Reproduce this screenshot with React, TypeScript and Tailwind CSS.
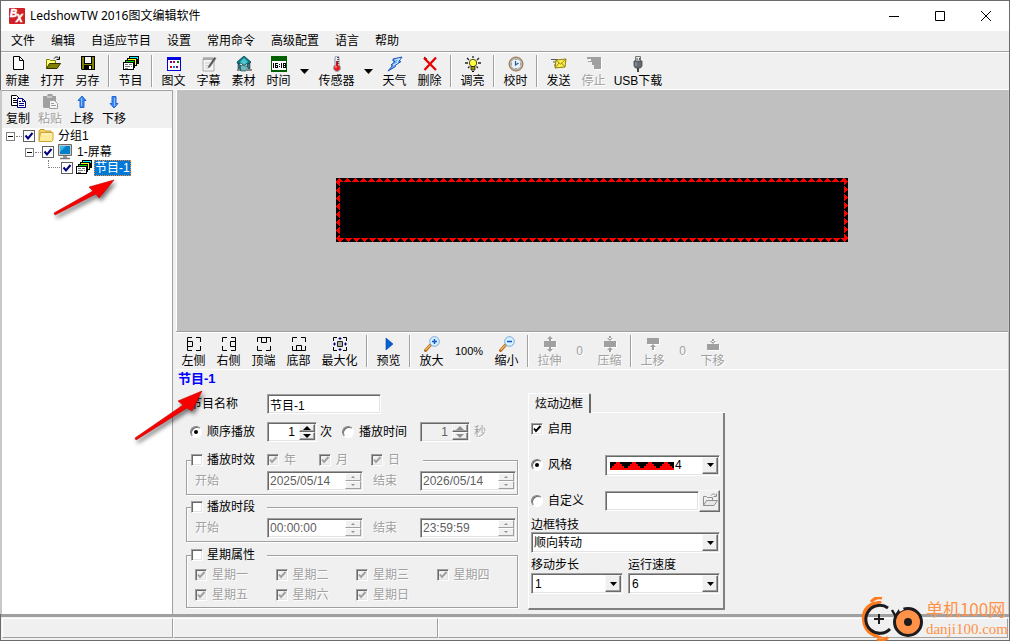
import React, { useId } from "react";

type IconProps = { children: React.ReactNode; size?: string };

function Ico({ children, size = "size-4" }: IconProps) {
  return (
    <svg viewBox="0 0 16 16" className={`${size} shrink-0`} aria-hidden="true">
      {children}
    </svg>
  );
}

/* ---------- icons ---------- */

const NewIcon = () => (
  <Ico>
    <path d="M3.500 .5h6l4 4v9h-10z" fill="#fff" stroke="#000" />
    <path d="M9.500 .5v4h4" fill="none" stroke="#000" />
  </Ico>
);

const OpenIcon = ({ gray = false }: { gray?: boolean }) => (
  <Ico>
    <path d="M1.500 12.500V3.500h3l1 1h5v3" fill={gray ? "#f0f0f0" : "#ffff80"} stroke={gray ? "#909090" : "#808000"} />
    <path d="M1.500 12.500l3-5h11l-3.500 5z" fill={gray ? "#e8e8e8" : "#808000"} stroke={gray ? "#909090" : "#303000"} />
    <path d="M9 2.500c1.500-2 3.500-2 5 0M14.500 .5v3h-3" fill="none" stroke={gray ? "#909090" : "#000"} />
  </Ico>
);

const SaveIcon = () => (
  <Ico>
    <path d="M1 0h14v14H2l-1-1z" fill="#000" />
    <path d="M2 1h2v7h8V1h2v12h-2V9H4v4H2z" fill="#808000" />
    <path d="M5 1h6v6H5z" fill="#f4f4f4" />
    <path d="M9 10h2v3H9z" fill="#fff" />
  </Ico>
);

const ProgramIcon = () => (
  <Ico>
    <g shapeRendering="crispEdges">
      <path d="M6 0h10v8h-3V3H6z" fill="#000" />
      <path d="M7 1h8v2H7z" fill="#00ffff" />
      <path d="M4 2h10v8H4z" fill="#000" />
      <path d="M5 3h8v2H5zM11 5h2v4h-2z" fill="#ffff00" />
      <path d="M2 4h10v8H2z" fill="#000" />
      <path d="M3 5h8v2H3zM9 7h2v4H9z" fill="#00e000" />
      <path d="M0 6h11v8H0z" fill="#000" />
      <path d="M1 7h9v6H1z" fill="#fff" />
      <path d="M2 8h3v1H2zM6 8h3v1H6zM2 10h5v1H2zM8 10h1v1H8zM2 12h3v1H2z" fill="#777" />
    </g>
  </Ico>
);

const GridIcon = () => (
  <Ico>
    <g shapeRendering="crispEdges">
      <path d="M1 1h14v14H1z" fill="#0000e0" />
      <path d="M2 4h12v10H2z" fill="#fff" />
      <path d="M4 5h2v2H4zM10 10h2v2h-2z" fill="#800080" />
      <path d="M7 5h2v2H7z" fill="#c00060" />
      <path d="M11 5h2v2h-2z" fill="#008000" />
      <path d="M4 10h2v2H4z" fill="#e00000" />
      <path d="M7 10h2v2H7z" fill="#0080ff" />
    </g>
  </Ico>
);

const SubtitleIcon = () => (
  <Ico>
    <path d="M2 3h11v12H2z" fill="#f4f4f4" stroke="#aaa" />
    <path d="M3 1v3M5 1v3M7 1v3M9 1v3M11 1v3" stroke="#888" strokeWidth="1" />
    <path d="M13.500 1L15 2.500 9 11l-2 1 .5-2z" fill="#555" stroke="#777" strokeWidth=".5" />
    <path d="M4 7h5M4 9.500h3M4 12h3" stroke="#ccc" />
  </Ico>
);

const MaterialIcon = () => (
  <Ico>
    <path d="M8 0l7 6-2 2-2-1-3 3-3-3-3 1-1-2z" fill="#0b7b86" stroke="#064750" strokeWidth=".8" />
    <path d="M8 2l4 4-4 3-4-3z" fill="#4cc6cc" />
    <path d="M2 7.500l3 2v5H2zM11 8l3-1v6l-3 1z" fill="#32777e" stroke="#123" strokeWidth=".5" />
    <path d="M4 10l4-1 5 3-3 3H5z" fill="#6fb7b8" stroke="#0b444b" strokeWidth=".6" />
    <path d="M10 13h6v2h-6zM1 13h3v2H1z" fill="#888" />
  </Ico>
);

const TimeIcon = () => (
  <Ico>
    <g shapeRendering="crispEdges">
      <path d="M0 0h16v16H0z" fill="#006000" />
      <path d="M1 5h14v9H1z" fill="#fff" />
      <path d="M2 7h1v5H2zM4 7h1v5H4zM5 7h2v1H5zM5 9h2v1H5zM6 10h1v2H6zM5 11h1v1H5zM8 8h1v1H8zM8 10h1v1H8zM10 7h1v5h-1zM12 7h1v5h-1zM14 7h1v5h-1zM13 7h1v1h-1zM13 9h1v1h-1zM13 11h1v1h-1z" fill="#000" />
    </g>
  </Ico>
);

const ThermometerIcon = () => (
  <Ico>
    <path d="M6 2a2 2 0 014 0v7a3.500 3.500 0 11-4 0z" fill="#eef3fa" stroke="#8793a8" />
    <circle cx="8" cy="12" r="3" fill="#e02020" />
    <path d="M8 5v6" stroke="#d01818" strokeWidth="2" />
    <path d="M8 1.500h2M8 3.500h2M8 5.500h2M8 7.500h2" stroke="#333" strokeWidth=".8" />
    <circle cx="7" cy="11" r=".9" fill="#ff9b9b" />
  </Ico>
);

const WeatherIcon = () => (
  <Ico>
    <path d="M6 3l9-2-3 4 2 .5-6 4 .5 1L1 15l4.500-5.500L4 9l4-3.500L6 5z" fill="#6db5f5" stroke="#1c4fb5" />
    <path d="M8 4l5-1.500-3 3.500 1 .5-5 3" fill="none" stroke="#d5efff" />
  </Ico>
);

const DeleteIcon = () => (
  <Ico>
    <path d="M2 2l12 12M14 1.500L2.500 14" stroke="#e80000" strokeWidth="2.300" />
    <path d="M2 1l3 2" stroke="#900000" />
  </Ico>
);

const BulbIcon = () => (
  <Ico>
    <path d="M8 0v2M2 2l2 2M14 2l-2 2M0 7h3M13 7h3M3 12l1.500-1.500M13 12l-1.500-1.500" stroke="#222" strokeWidth="1.300" />
    <circle cx="8" cy="7" r="3.700" fill="#ffff38" stroke="#504c00" />
    <path d="M6 6a2 2 0 012-1.500" fill="none" stroke="#fff" />
    <path d="M6 10.500h4V14H6z" fill="#9a9100" stroke="#222" strokeWidth=".8" />
    <path d="M7 15.500h2" stroke="#000" />
  </Ico>
);

const ClockIcon = () => (
  <Ico>
    <circle cx="8" cy="8" r="7" fill="#c9a77a" stroke="#90765a" />
    <circle cx="8" cy="8" r="5.200" fill="#e6f3fc" stroke="#a9bac9" />
    <path d="M7.500 5v4l3-2" fill="none" stroke="#31577c" strokeWidth="1.200" />
    <path d="M8 3v1M8 12v1M3 8h1M12 8h1" stroke="#668" />
  </Ico>
);

const SendIcon = () => (
  <Ico>
    <path d="M0 3.500h7M2 6h4M3 9h3" stroke="#555" />
    <path d="M5 4l10-1-1 8-10 1z" fill="#ffed50" stroke="#8b8110" />
    <path d="M5 4l4.500 4L15 3M4 12l4-5M14 11l-3.500-4" fill="none" stroke="#8b8110" strokeWidth=".9" />
  </Ico>
);

const StopIcon = () => (
  <Ico>
    <path d="M2 2h14v12H9V9H6V6H2z" fill="#fff" />
    <path d="M1 1h14v12H8V9H6V6H2V5h3V4H1z" fill="#a0a0a0" />
    <path d="M1 3.500h4" stroke="#f0f0f0" />
  </Ico>
);

const UsbIcon = () => (
  <Ico>
    <path d="M5.500 .5h5V6h-5z" fill="#e9e9e9" stroke="#777" />
    <path d="M6.500 2h1v2h-1zM9 2h1v2H9z" fill="#555" />
    <path d="M4 5h8v5l-1.500 2h-5L4 10z" fill="#666b72" stroke="#41454b" strokeWidth=".8" />
    <path d="M6 6v4" stroke="#a3a7ac" />
    <path d="M8 12v4" stroke="#444" strokeWidth="2" />
  </Ico>
);

const CopyIcon = () => (
  <Ico>
    <path d="M1.500 1.500h5l3 3v7h-8z" fill="#fff" stroke="#000" />
    <path d="M3 4.500h3M3 6.500h4M3 8.500h4" stroke="#000" />
    <path d="M7.500 4.500h5l3 3v6h-8z" fill="#fff" stroke="#000080" />
    <path d="M12.500 4.500v3h3M9 7.500h2M9 9.500h5M9 11.500h5" fill="none" stroke="#000080" />
  </Ico>
);

const PasteIcon = () => (
  <Ico>
    <path d="M1 2h4l1-2h4l1 2h3v12H2l-1-1z" fill="#a0a0a0" />
    <path d="M5 3h5" stroke="#eee" />
    <path d="M7.500 6.500h5l3 3v5h-8z" fill="#f4f4f4" stroke="#a0a0a0" />
    <path d="M9 9.500h3M9 11.500h5" stroke="#a0a0a0" />
  </Ico>
);

const BlueArrow = ({ down = false }: { down?: boolean }) => (
  <Ico>
    <g transform={down ? "rotate(180 8 8)" : undefined}>
      <path d="M8 2l4 4.500H10v7H6v-7H4z" fill="#3a86f0" stroke="#2468d8" />
      <path d="M7.500 4v8" stroke="#8fc2ff" />
    </g>
  </Ico>
);

const FolderIcon = () => (
  <Ico>
    <path d="M1 13V3l1-1.500h4L7.500 3H13v2" fill="#f5d066" stroke="#c69a26" />
    <path d="M1 13.500l1.500-9h12.500V12l-1.500 1.500z" fill="#ffeb9c" stroke="#cfa433" />
    <path d="M4 6h9" stroke="#fff7cf" />
  </Ico>
);

const MonitorIcon = () => (
  <Ico>
    <path d="M1.500 .5h13v11h-13z" fill="#c8c8c8" stroke="#6b6b6b" />
    <path d="M3 2h10v8H3z" fill="#0080c8" />
    <path d="M3 2h6L3 8z" fill="#37b5e6" />
    <path d="M6 12h4v2H6z" fill="#999" />
    <path d="M3 14.500h10" stroke="#777" strokeWidth="1.500" />
  </Ico>
);

type Side = "left" | "right" | "top" | "bottom" | "max";
const inner: Record<Side, string> = {
  left: "M1.500 5.500h5v5h-5",
  right: "M14.500 5.500h-5v5h5",
  top: "M5.500 1.500v5h5v-5",
  bottom: "M5.500 14.500v-5h5v5",
  max: "",
};
const outer: Record<Side, string> = {
  left: "M6 1.500H1.500v13H6M10 1.500h4.500V6M14.500 10v4.500H10",
  right: "M10 1.500h4.500v13H10M6 1.500H1.500V6M1.500 10v4.500H6",
  top: "M1.500 6V1.500h13V6M1.500 10v4.500H6M10 14.500h4.500V10",
  bottom: "M1.500 10v4.500h13V10M1.500 6V1.500H6M10 1.500h4.500V6",
  max: "M1.500 5V1.500H5M11 1.500h3.500V5M14.500 11v3.500H11M5 14.500H1.500V11",
};

const AlignIcon = ({ side }: { side: Side }) => (
  <Ico>
    <path d={outer[side]} fill="none" stroke="#000" />
    <path d={inner[side]} fill="none" stroke="#000" />
    {side === "max" && (
      <>
        <path d="M5.500 5.500h5v5h-5z" fill="#b0b0b0" stroke="#222" />
        <path d="M8 1v3M6.500 2.500h3M8 12v3M6.500 13.500h3M1 8h3M2.500 6.500v3M12 8h3M13.500 6.500v3" stroke="#000080" />
      </>
    )}
  </Ico>
);

const PlayIcon = () => (
  <Ico>
    <path d="M5 2l7 6-7 6z" fill="#0060d0" stroke="#0048a8" strokeWidth=".6" />
  </Ico>
);

const ZoomIcon = ({ plus = false }: { plus?: boolean }) => (
  <Ico>
    <path d="M6.500 9L1.500 14.500" stroke="#b06a20" strokeWidth="3" strokeLinecap="round" />
    <path d="M6.500 9L1.500 14" stroke="#f5b75c" strokeWidth="1.300" />
    <circle cx="10.500" cy="5.500" r="4.800" fill="#d4f2ff" stroke="#78a6dc" />
    <path d={plus ? "M8 5.500h5M10.500 3v5" : "M8 5.500h5"} stroke="#1757c8" strokeWidth="1.500" />
  </Ico>
);

const stretchPaths = {
  stretch: "M2 5h12v6H2zM7 3h2v2H7zM5 3l3-3 3 3zM7 11h2v2H7zM5 13l3 3 3-3z",
  squeeze: "M2 5h12v6H2zM7 0h2v3H7zM5 2l3 3 3-3zM7 13h2v3H7zM5 14l3-3 3 3z",
  up: "M2 2h12v6H2zM5 11l3-3 3 3zM7 11h2v3H7z",
  down: "M2 8h12v6H2zM5 5l3 3 3-3zM7 3h2v3H7z",
};

const StretchIcon = ({ kind }: { kind: keyof typeof stretchPaths }) => (
  <Ico>
    <path d={stretchPaths[kind]} fill="#fff" transform="translate(1 1)" />
    <path d={stretchPaths[kind]} fill="#a0a0a0" />
  </Ico>
);

/* ---------- shared styles ---------- */

const sunken =
  "border border-[#a0a0a0] border-b-white border-r-white shadow-[inset_1px_1px_0_#696969,inset_-1px_-1px_0_#e3e3e3]";
const raised =
  "border border-[#f8f8f8] border-b-[#696969] border-r-[#696969] bg-[#f0f0f0] shadow-[inset_-1px_-1px_0_#a0a0a0]";
const dimText = "text-[#a0a0a0] [text-shadow:1px_1px_0_#fff]";

/* ---------- toolbar parts ---------- */

type ToolProps = { icon: React.ReactNode; label: string; width?: string; disabled?: boolean };

function Tool({ icon, label, width = "w-[35px]", disabled = false }: ToolProps) {
  return (
    <button
      disabled={disabled}
      className={`flex h-9 shrink-0 flex-col items-center gap-px whitespace-nowrap pt-[3px] ${width} ${disabled ? dimText : ""}`}
    >
      {icon}
      <span>{label}</span>
    </button>
  );
}

const Sep = () => (
  <div className="flex h-9 w-2 shrink-0 justify-center py-0.5">
    <div className="w-0.5 border-l border-[#a0a0a0] bg-white" />
  </div>
);

const DropArrow = ({ label }: { label: string }) => (
  <button aria-label={label} className="flex h-9 w-[17px] shrink-0 items-center justify-center">
    <svg viewBox="0 0 9 5" className="h-[5px] w-[9px]">
      <path d="M0 0h9L4.500 5z" />
    </svg>
  </button>
);

/* ---------- form parts ---------- */

type CheckProps = { label: string; checked?: boolean; disabled?: boolean; className?: string; gap?: string };

function Check({ label, checked = false, disabled = false, className = "", gap = "gap-[5px]" }: CheckProps) {
  return (
    <label className={`flex h-4 items-center whitespace-nowrap ${gap} ${disabled ? dimText : ""} ${className}`}>
      <span className="relative size-3 shrink-0">
        <input
          type="checkbox"
          defaultChecked={checked}
          disabled={disabled}
          className={`peer block size-3 appearance-none ${sunken} ${disabled ? "bg-[#f0f0f0]" : "bg-white"}`}
        />
        <svg viewBox="0 0 12 12" className="pointer-events-none absolute inset-0 hidden size-3 peer-checked:block">
          <path d="M3 5.500L5 8l4.500-5" fill="none" stroke={disabled ? "#a0a0a0" : "#000"} strokeWidth="1.900" />
        </svg>
      </span>
      {label}
    </label>
  );
}

function Radio({ label, name, checked = false, className = "" }: { label: string; name: string; checked?: boolean; className?: string }) {
  return (
    <label className={`flex h-4 items-center gap-[5px] whitespace-nowrap ${className}`}>
      <span className="relative size-3 shrink-0">
        <input
          type="radio"
          name={name}
          defaultChecked={checked}
          className="peer block size-3 appearance-none rounded-full border border-[#808080] border-b-white border-r-white bg-white shadow-[inset_1px_1px_0_#696969]"
        />
        <span className="pointer-events-none absolute inset-1 hidden rounded-full bg-black peer-checked:block" />
      </span>
      {label}
    </label>
  );
}

function Spin({ value, label, disabled = false, date = false }: { value: string; label: string; disabled?: boolean; date?: boolean }) {
  const fill = disabled ? "fill-[#909090]" : "fill-black";
  const size = date ? "h-0.5 w-1" : "h-1 w-2";
  const button = date ? "border border-white border-b-[#a0a0a0] border-r-[#a0a0a0] bg-[#f0f0f0]" : raised;
  return (
    <div className={`flex h-5 p-px ${sunken} ${date ? "w-24" : "w-[50px]"} ${disabled && !date ? "bg-[#f0f0f0]" : "bg-white"}`}>
      <input
        aria-label={label}
        defaultValue={value}
        disabled={disabled}
        className={`w-full min-w-0 bg-transparent ${date ? "pl-px" : "pr-1 text-right"} ${disabled ? "text-[#606060]" : ""}`}
      />
      <div className="flex w-4 shrink-0 flex-col bg-[#f0f0f0]">
        <button disabled={disabled} aria-label={`${label} +`} className={`flex flex-1 items-center justify-center ${button}`}>
          <svg viewBox="0 0 8 4" className={`${size} ${fill}`}>
            <path d="M0 4l4-4 4 4z" />
          </svg>
        </button>
        <button disabled={disabled} aria-label={`${label} -`} className={`flex flex-1 items-center justify-center ${button}`}>
          <svg viewBox="0 0 8 4" className={`${size} ${fill}`}>
            <path d="M0 0l4 4 4-4z" />
          </svg>
        </button>
      </div>
    </div>
  );
}

type ComboProps = { id: string; options: string[]; className?: string; pad?: string; children?: React.ReactNode; label?: string };

function Combo({ id, options, className = "", pad = "pl-[3px]", children, label }: ComboProps) {
  return (
    <div className={`relative h-[21px] ${className}`}>
      <select id={id} aria-label={label} className={`block size-full appearance-none bg-white ${pad} ${sunken}`}>
        {options.map((o) => (
          <option key={o}>{o}</option>
        ))}
      </select>
      {children}
      <span className={`pointer-events-none absolute inset-y-0.5 right-0.5 flex w-4 items-center justify-center ${raised}`}>
        <svg viewBox="0 0 7 4" className="h-1 w-[7px]">
          <path d="M0 0h7L3.500 4z" />
        </svg>
      </span>
    </div>
  );
}

function Group({ legend, children }: { legend: React.ReactNode; children: React.ReactNode }) {
  return (
    <fieldset className="min-w-0 border border-[#a0a0a0] shadow-[1px_1px_0_#fff,inset_1px_1px_0_#fff]">
      <legend className="ml-1 flex bg-[#f0f0f0]">{legend}</legend>
      {children}
    </fieldset>
  );
}

function Range({ from, to, name }: { from: string; to: string; name: string }) {
  return (
    <div className={`grid grid-cols-[72px_96px_57px_96px] items-center py-[3px] pl-2 ${dimText}`}>
      <span>开始</span>
      <Spin date disabled value={from} label={`${name}开始`} />
      <span className="pl-2.5">结束</span>
      <Spin date disabled value={to} label={`${name}结束`} />
    </div>
  );
}

/* ---------- tree ---------- */

const Expander = () => (
  <button aria-label="折叠" className="flex size-[9px] shrink-0 items-center justify-center border border-[#808080] bg-white">
    <span className="h-px w-[5px] bg-black" />
  </button>
);

function TreeCheck({ label }: { label: string }) {
  return (
    <span className="relative mr-[3px] size-3 shrink-0">
      <input type="checkbox" defaultChecked aria-label={label} className="peer block size-3 appearance-none border border-[#606060] bg-white" />
      <svg viewBox="0 0 12 12" className="pointer-events-none absolute inset-0 hidden size-3 peer-checked:block">
        <path d="M2.500 5.500L5 8.500 9.500 3" fill="none" stroke="#000080" strokeWidth="2" />
      </svg>
    </span>
  );
}

/* ---------- preview ---------- */

function LedPreview() {
  const id = useId();
  return (
    <svg viewBox="0 0 512 64" className="h-16 w-[512px] shrink-0" shapeRendering="crispEdges" role="img" aria-label="节目-1">
      <defs>
        <pattern id={`${id}t`} width="8" height="4" patternUnits="userSpaceOnUse">
          <path d="M3 0h1v1H3zM2 1h3v1H2zM1 2h5v1H1zM0 3h7v1H0z" fill="#f00" />
        </pattern>
        <pattern id={`${id}b`} width="8" height="4" patternUnits="userSpaceOnUse">
          <path d="M1 0h7v1H1zM2 1h5v1H2zM3 2h3v1H3zM4 3h1v1H4z" fill="#f00" />
        </pattern>
        <pattern id={`${id}l`} width="4" height="8" patternUnits="userSpaceOnUse">
          <path d="M0 4h1v1H0zM1 3h1v3H1zM2 2h1v5H2zM3 1h1v7H3z" fill="#f00" />
        </pattern>
        <pattern id={`${id}r`} width="4" height="8" patternUnits="userSpaceOnUse">
          <path d="M3 3h1v1H3zM2 2h1v3H2zM1 1h1v5H1zM0 0h1v7H0z" fill="#f00" />
        </pattern>
      </defs>
      <rect width="512" height="64" />
      <rect width="512" height="4" fill={`url(#${id}t)`} />
      <rect y="60" width="512" height="4" fill={`url(#${id}b)`} />
      <rect width="4" height="64" fill={`url(#${id}l)`} />
      <rect x="508" width="4" height="64" fill={`url(#${id}r)`} />
    </svg>
  );
}

function Pointer({ d, className }: { d: string; className: string }) {
  return (
    <svg viewBox="0 0 70 52" className={`pointer-events-none absolute h-[52px] w-[70px] overflow-visible drop-shadow-[2px_3px_2px_rgba(0,0,0,0.55)] ${className}`}>
      <path d={d} fill="#f80000" stroke="#c00000" strokeWidth=".6" strokeLinejoin="round" />
    </svg>
  );
}

const menus = ["文件", "编辑", "自适应节目", "设置", "常用命令", "高级配置", "语言", "帮助"];
const days = ["星期一", "星期二", "星期三", "星期四", "星期五", "星期六", "星期日"];

export default function App() {
  return (
    <div className="relative flex min-h-screen flex-col bg-[#f0f0f0] font-['Liberation_Sans','Noto_Sans_CJK_SC',sans-serif] text-xs leading-4 text-black outline-1 -outline-offset-1 outline-[#6b6b6b]">
      <header className="flex h-[31px] items-center bg-white pl-[9px] pr-px">
        <svg viewBox="0 0 16 16" className="size-4" aria-hidden="true">
          <rect width="16" height="16" rx="1" fill="#d02128" />
          <g fill="#fff" stroke="#fff" strokeWidth=".5" fontFamily="Liberation Sans" fontWeight="bold" fontStyle="italic">
            <text x="1" y="9" fontSize="10">B</text>
            <text x="7" y="14" fontSize="10">X</text>
          </g>
        </svg>
        <h1 className="ml-[5px] font-['Noto_Sans','Noto_Sans_CJK_SC',sans-serif]">LedshowTW 2016图文编辑软件</h1>
        <div className="ml-auto flex">
          {["M0 5.500h10", "M.5 .5h9v9h-9z", "M0 0l10 10M10 0L0 10"].map((d, i) => (
            <button key={d} aria-label={["最小化", "最大化", "关闭"][i]} className="flex h-[30px] w-[46px] items-center justify-center">
              <svg viewBox="0 0 10 10" className="size-2.5">
                <path d={d} fill="none" stroke="#000" />
              </svg>
            </button>
          ))}
        </div>
      </header>

      <nav className="flex h-5 items-center gap-4 pl-[11px]">
        {menus.map((m) => (
          <button key={m}>{m}</button>
        ))}
      </nav>

      <div className="border-t border-[#a0a0a0]">
        <div className="flex h-[38px] border-y border-white">
          <Tool icon={<NewIcon />} label="新建" />
          <Tool icon={<OpenIcon />} label="打开" />
          <Tool icon={<SaveIcon />} label="另存" />
          <Sep />
          <Tool icon={<ProgramIcon />} label="节目" />
          <Sep />
          <Tool icon={<GridIcon />} label="图文" />
          <Tool icon={<SubtitleIcon />} label="字幕" />
          <Tool icon={<MaterialIcon />} label="素材" />
          <Tool icon={<TimeIcon />} label="时间" />
          <DropArrow label="时间菜单" />
          <Tool icon={<ThermometerIcon />} label="传感器" width="w-[47px]" />
          <DropArrow label="传感器菜单" />
          <Tool icon={<WeatherIcon />} label="天气" />
          <Tool icon={<DeleteIcon />} label="删除" />
          <Sep />
          <Tool icon={<BulbIcon />} label="调亮" />
          <Sep />
          <Tool icon={<ClockIcon />} label="校时" />
          <Sep />
          <Tool icon={<SendIcon />} label="发送" />
          <Tool icon={<StopIcon />} label="停止" disabled />
          <Tool icon={<UsbIcon />} label="USB下载" width="w-[54px]" />
        </div>
      </div>

      <main className="flex flex-1">
        <aside className="relative flex w-[173px] shrink-0 flex-col border-t border-r border-l-2 border-[#a0a0a0] border-l-[#c8c8c8] bg-white">
          <div className="flex h-[37px] bg-[#f0f0f0]">
            <Tool icon={<CopyIcon />} label="复制" width="w-8" />
            <Tool icon={<PasteIcon />} label="粘贴" width="w-8" disabled />
            <Tool icon={<BlueArrow />} label="上移" width="w-8" />
            <Tool icon={<BlueArrow down />} label="下移" width="w-8" />
          </div>
          <ul>
            <li>
              <div className="flex h-4 items-center pl-1">
                <Expander />
                <span className="ml-px mr-px w-1.5 border-t border-dotted border-[#808080]" />
                <TreeCheck label="分组1" />
                <FolderIcon />
                <span className="pl-1">分组1</span>
              </div>
              <ul>
                <li>
                  <div className="flex h-4 items-center pl-[23px]">
                    <Expander />
                    <span className="ml-px mr-px w-1.5 border-t border-dotted border-[#808080]" />
                    <TreeCheck label="1-屏幕" />
                    <MonitorIcon />
                    <span className="pl-1">1-屏幕</span>
                  </div>
                  <ul>
                    <li className="flex h-4 items-center pl-[46px]">
                      <span className="mr-px h-2 w-3 self-start border-b border-l border-dotted border-[#808080]" />
                      <TreeCheck label="节目-1" />
                      <ProgramIcon />
                      <span className="ml-0.5 h-4 bg-[#0078d7] px-px text-white outline-1 -outline-offset-1 outline-dotted outline-[#ff8728]">节目-1</span>
                    </li>
                  </ul>
                </li>
              </ul>
            </li>
          </ul>
          <Pointer className="left-[51px] top-[88px]" d="M61 1L46 19 43 15 2 36 1 34 40 12 36 8z" />
        </aside>

        <section className="ml-[3px] flex min-w-0 flex-1 flex-col border-r-2 border-[#c8c8c8]">
          <div className="flex flex-1 items-center justify-center overflow-hidden border-l border-white bg-[#c0c0c0] pb-px pr-px">
            <LedPreview />
          </div>

          <div className="border-t border-[#a0a0a0]">
            <div className="flex h-[38px] border-y border-white">
              <Tool icon={<AlignIcon side="left" />} label="左侧" />
              <Tool icon={<AlignIcon side="right" />} label="右侧" />
              <Tool icon={<AlignIcon side="top" />} label="顶端" />
              <Tool icon={<AlignIcon side="bottom" />} label="底部" />
              <Tool icon={<AlignIcon side="max" />} label="最大化" width="w-[47px]" />
              <Sep />
              <Tool icon={<PlayIcon />} label="预览" />
              <Sep />
              <Tool icon={<ZoomIcon plus />} label="放大" />
              <span className="flex w-10 items-center justify-center text-[11px]">100%</span>
              <Tool icon={<ZoomIcon />} label="缩小" />
              <Sep />
              <Tool icon={<StretchIcon kind="stretch" />} label="拉伸" disabled />
              <span className={`flex w-[25px] items-center justify-center ${dimText}`}>0</span>
              <Tool icon={<StretchIcon kind="squeeze" />} label="压缩" disabled />
              <Sep />
              <Tool icon={<StretchIcon kind="up" />} label="上移" disabled />
              <span className={`flex w-[25px] items-center justify-center ${dimText}`}>0</span>
              <Tool icon={<StretchIcon kind="down" />} label="下移" disabled />
            </div>
          </div>

          <div className="relative pb-1">
            <h2 className="pl-0.5 pt-px text-[13px] font-bold text-[#0000ff]">节目-1</h2>
            <form className="mt-1.5 flex items-start gap-2.5 pl-2.5">
              <div className="flex w-[332px] shrink-0 flex-col pt-px">
                <div className="flex items-center pl-1">
                  <label htmlFor="name" className="w-[77px]">节目名称</label>
                  <input id="name" defaultValue="节目-1" className={`h-5 w-[114px] bg-white px-0.5 ${sunken}`} />
                </div>
                <div className="mt-2 flex items-center pl-1">
                  <Radio name="play" label="顺序播放" checked className="w-[77px]" />
                  <Spin value="1" label="播放次数" />
                  <span className="w-[25px] pl-[3px]">次</span>
                  <Radio name="play" label="播放时间" className="w-[78px]" />
                  <Spin value="1" label="播放秒数" disabled />
                  <span className={`pl-1 ${dimText}`}>秒</span>
                </div>
                <div className="mt-2.5 flex flex-col gap-1">
                  <Group
                    legend={
                      <>
                        <Check label="播放时效" className="w-[76px]" gap="gap-1" />
                        <Check label="年" checked disabled className="w-[52px]" />
                        <Check label="月" checked disabled className="w-[52px]" />
                        <Check label="日" checked disabled className="w-[52px]" />
                      </>
                    }
                  >
                    <Range from="2025/05/14" to="2026/05/14" name="播放时效" />
                  </Group>
                  <Group legend={<Check label="播放时段" className="w-[76px]" gap="gap-1" />}>
                    <Range from="00:00:00" to="23:59:59" name="播放时段" />
                  </Group>
                  <div className="pt-px">
                    <Group legend={<Check label="星期属性" className="w-[76px]" gap="gap-1" />}>
                      <div className="grid grid-cols-4 gap-y-1 pb-1 pl-2 pt-1">
                        {days.map((d) => (
                          <Check key={d} label={d} checked disabled />
                        ))}
                      </div>
                    </Group>
                  </div>
                </div>
              </div>

              <div className="w-[197px] shrink-0">
                <div role="tablist" className="flex">
                  <button
                    type="button"
                    role="tab"
                    aria-selected="true"
                    className="h-5 rounded-t-xs border-l border-r-2 border-t border-white border-r-[#696969] px-1.5"
                  >
                    炫动边框
                  </button>
                  <div className="flex-1 border-b border-white" />
                </div>
                <div role="tabpanel" className="border-b-2 border-l border-r-2 border-[#808080] border-l-white pb-3.5 pl-0.5 pr-[3px]">
                  <div className="flex h-8 items-center">
                    <Check label="启用" checked />
                  </div>
                  <div className="flex h-10 items-center">
                    <Radio name="style" label="风格" checked className="w-[74px]" />
                    <Combo id="style" label="风格" options={["4"]} pad="pl-[69px]" className="flex-1">
                      <svg viewBox="0 0 32 4" className="pointer-events-none absolute left-[5px] top-[7px] h-2 w-16" shapeRendering="crispEdges">
                        <rect width="32" height="4" />
                        <path
                          d="M3 0h2v1H3zM2 1h4v1H2zM1 2h6v1H1zM0 3h8v1H0zM11 0h2v1h-2zM10 1h4v1h-4zM9 2h6v1H9zM8 3h8v1H8zM19 0h2v1h-2zM18 1h4v1h-4zM17 2h6v1h-6zM16 3h8v1h-8zM27 0h2v1h-2zM26 1h4v1h-4zM25 2h6v1h-6zM24 3h8v1h-8z"
                          fill="#f00"
                        />
                      </svg>
                    </Combo>
                  </div>
                  <div className="flex h-8 items-center">
                    <Radio name="style" label="自定义" className="w-[74px]" />
                    <input aria-label="自定义" className={`h-5 w-0 flex-1 bg-white px-1 ${sunken}`} />
                    <button type="button" disabled aria-label="浏览" className={`flex h-[22px] w-[21px] items-center justify-center ${raised}`}>
                      <OpenIcon gray />
                    </button>
                  </div>
                  <label htmlFor="effect" className="block h-[15px]">边框特技</label>
                  <Combo id="effect" options={["顺向转动"]} pad="pl-0.5" />
                  <div className="mt-1 grid grid-cols-2 gap-x-[5px]">
                    <label htmlFor="step">移动步长</label>
                    <label htmlFor="speed">运行速度</label>
                    <Combo id="step" options={["1"]} />
                    <Combo id="speed" options={["6"]} />
                  </div>
                </div>
              </div>
            </form>
            <Pointer className="-left-[42px] top-5" d="M68 1L58 21 53 18 2 50 1 48 49 15 44 11z" />
          </div>
        </section>
      </main>

      <footer className="flex h-[27px] border-t-[3px] border-[#a0a0a0] px-0.5 pb-[3px] pt-px">
        <div className="w-[171px] border border-white border-r-[#a0a0a0] border-b-[#a0a0a0]" />
        <div className="w-[265px] border border-white border-r-[#a0a0a0] border-b-[#a0a0a0]" />
        <div className="flex-1 border border-white border-r-[#a0a0a0] border-b-[#a0a0a0]" />
      </footer>

      <div className="pointer-events-none absolute bottom-0 right-0.5 flex items-center gap-[3px] whitespace-nowrap text-[#ff9248]">
        <svg viewBox="0 0 62 44" className="h-11 w-[62px]" aria-hidden="true">
          <path d="M20 4C5 4 0 14 1 23c1 12 10 20 25 18-12-2-20-9-21-18C4 13 10 8 21 6z" fill="#ff7a1c" />
          <path d="M10 5c3-4 7-5 11-4M16 42c4 2 9 1 11-2" fill="none" stroke="#ff7a1c" strokeWidth="3" />
          <path d="M27 11A14 14 0 1029 32" fill="none" stroke="#1d1b1d" strokeWidth="3" />
          <path d="M13 22h10M18 17v10" stroke="#1d1b1d" strokeWidth="2" />
          <path d="M31 13l4 7M39 12l-5 9" stroke="#1d1b1d" strokeWidth="2.500" />
          <circle cx="47" cy="25" r="13.500" fill="#ff9248" stroke="#1d1b1d" strokeWidth="3" />
          <path d="M38 13l4-2" stroke="#f0f0f0" strokeWidth="4" fill="none" />
          <circle cx="47" cy="25" r="4" fill="#1d1b1d" />
        </svg>
        <div>
          <div className="font-['Noto_Sans_CJK_SC',sans-serif] text-[17px] leading-5">单机100网</div>
          <div className="font-['Liberation_Serif',serif] text-[15px] leading-5">danji100.com</div>
        </div>
      </div>
    </div>
  );
}
